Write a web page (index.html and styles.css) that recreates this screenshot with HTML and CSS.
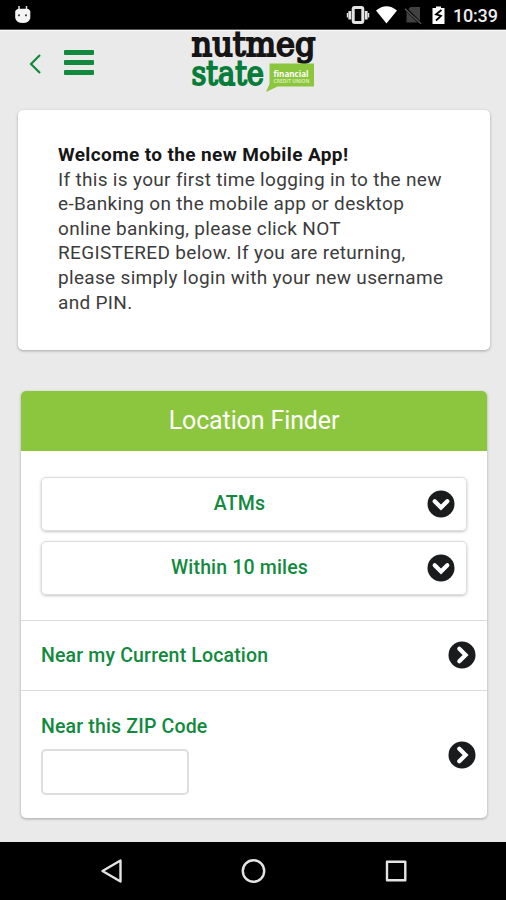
FILE: index.html
```html
<!DOCTYPE html>
<html lang="en">
<head>
<meta charset="utf-8">
<title>Nutmeg State Financial Credit Union</title>
<link rel="stylesheet" href="styles.css">
</head>
<body>
<div class="screen">
  <div class="status">
    <svg class="droid" width="18" height="20" viewBox="0 0 18 20"><path d="M5 1v5M12.500 1v5" stroke="#ddd" stroke-width="1.500"/><path d="M1.200 6Q3 3.800 5 3.800h8q2 0 3.300 2.200v7q-1 5-7.500 5T1.200 13z" fill="#f4f4f4"/><circle cx="5" cy="10.300" r="1.100" fill="#444"/><circle cx="12" cy="10.300" r="1.100" fill="#444"/></svg>
    <svg width="110" height="30" viewBox="0 0 110 30">
      <g stroke="#e4e4e4" fill="none"><rect x="7.200" y="7.500" width="9.600" height="15" rx="1.500" stroke-width="3"/><path d="M3.800 11v8.500M20.200 11v8.500" stroke-width="2.800"/><path d="M1.500 13v4.500M22.500 13v4.500" stroke-width="1.400"/></g>
      <path d="M30 10.500Q40.500 2 51 10.500L40.500 23.500z" fill="#fff"/>
      <path d="M60.500 11l4-4H74v15.500H60.500z" fill="#414141"/><path d="M58.800 7.800L75 24" stroke="#000" stroke-width="3"/><path d="M59 8.800L75 23.700" stroke="#555" stroke-width="1.500"/>
      <path d="M86.500 8h3.500V6.500h5V8h3.500v16h-12z" fill="#fff"/><path d="M95.500 10l-5.500 4.300 5 1.600-5 4.600" fill="none" stroke="#000" stroke-width="1.800"/>
    </svg>
    <span class="clock">10:39</span>
  </div>
  <header class="top">
    <svg class="back" width="14" height="22" viewBox="0 0 14 22"><path d="M12 2L3 11l9 9" fill="none" stroke="#118a3e" stroke-width="2.200"/></svg>
    <div class="menu"><i></i><i></i><i></i></div>
    <svg class="logo" width="130" height="66" viewBox="0 0 130 66">
      <text class="brand dark" x="1.500" y="24.500" textLength="124" lengthAdjust="spacingAndGlyphs">nutmeg</text>
      <text class="brand green" x="1.500" y="54" textLength="72.500" lengthAdjust="spacingAndGlyphs">state</text>
      <path d="M79.500 32.500H124v23H87.500L76 61l3.500-8z" fill="#8cc63e"/>
      <text class="fin" x="83.500" y="45.700" textLength="35" lengthAdjust="spacingAndGlyphs">financial</text>
      <text class="cu" x="83.500" y="51.700" textLength="36" lengthAdjust="spacingAndGlyphs">CREDIT UNION</text>
    </svg>
  </header>
  <section class="card welcome">
    <b>Welcome to the new Mobile App!</b>
    <p>If this is your first time logging in to the new<br>e-Banking on the mobile app or desktop<br>online banking, please click NOT<br>REGISTERED below. If you are returning,<br>please simply login with your new username<br>and PIN.</p>
  </section>
  <section class="card finder">
    <h1>Location Finder</h1>
    <div class="selects">
      <div class="select"><span>ATMs</span><svg class="disc down" viewBox="0 0 28 28"><circle cx="14" cy="14" r="13.500" fill="#191b1d"/><path d="M11.300 7.700l6.300 6.300-6.300 6.300" fill="none" stroke="#fff" stroke-width="4.200" stroke-linecap="round"/></svg></div>
      <div class="select"><span>Within 10 miles</span><svg class="disc down" viewBox="0 0 28 28"><circle cx="14" cy="14" r="13.500" fill="#191b1d"/><path d="M11.300 7.700l6.300 6.300-6.300 6.300" fill="none" stroke="#fff" stroke-width="4.200" stroke-linecap="round"/></svg></div>
    </div>
    <div class="row near"><span>Near my Current Location</span><svg class="disc" viewBox="0 0 28 28"><circle cx="14" cy="14" r="13.500" fill="#191b1d"/><path d="M11.300 7.700l6.300 6.300-6.300 6.300" fill="none" stroke="#fff" stroke-width="4.200" stroke-linecap="round"/></svg></div>
    <div class="row zip"><label><span>Near this ZIP Code</span><input type="text"></label><svg class="disc" viewBox="0 0 28 28"><circle cx="14" cy="14" r="13.500" fill="#191b1d"/><path d="M11.300 7.700l6.300 6.300-6.300 6.300" fill="none" stroke="#fff" stroke-width="4.200" stroke-linecap="round"/></svg></div>
  </section>
  <nav class="nav">
    <svg width="506" height="58" viewBox="0 0 506 58" fill="none" stroke="#e4e4e4" stroke-width="2.400" stroke-linejoin="round"><path d="M120.500 18.500v21L102.500 29z"/><circle cx="253.500" cy="29" r="10.700"/><rect x="387" y="19.700" width="18.300" height="18.600"/></svg>
  </nav>
</div>
</body>
</html>
```
FILE: styles.css
```css
* { box-sizing: border-box; }
body { margin: 0; font-family: Roboto, "Liberation Sans", sans-serif; background: #eaeaea; }
svg { display: block; flex: none; }
.screen { width: 506px; height: 900px; display: flex; flex-direction: column; overflow: hidden; }
.status { height: 30px; flex: none; background: #000; border-bottom: 1px solid #555; display: flex; padding-left: 14px; color: #eee; }
.droid { margin: 5px 314px 0 0; }
.clock { font-size: 18px; font-weight: 500; line-height: 32px; margin-left: -3px; letter-spacing: -.2px; }
.top { height: 79px; flex: none; display: flex; border-top: 1px solid #f8f8f8; }
.back { margin: 22px 0 0 28px; }
.menu { width: 30px; margin: 19px 0 0 22px; display: flex; flex-direction: column; gap: 5px; }
.menu i { height: 5px; border-radius: 1px; background: #118a3e; }
.logo { margin-left: 96px; overflow: visible; }
.brand { font: 33px "DejaVu Serif", serif; stroke-width: 1.900px; }
.dark { fill: #151515; stroke: #151515; }
.green { fill: #087c39; stroke: #087c39; }
.fin { font: bold 8.500px "Open Sans", sans-serif; fill: #fff; }
.cu { font: bold 4.500px "Open Sans", sans-serif; fill: #d9efb4; }
.card { background: #fff; border-radius: 5px; flex: none; box-shadow: 0 1px 3px rgba(0,0,0,.3); }
.welcome { margin: 1px 16px 0 18px; height: 240px; padding: 33px 40px; font-size: 19px; line-height: 24.600px; letter-spacing: .32px; color: #3c3c3c; white-space: nowrap; }
.welcome b { color: #161616; font-weight: 700; letter-spacing: .38px; }
.welcome p { margin: 0; }
.finder { margin: 41px 19px 0 21px; height: 427px; display: flex; flex-direction: column; overflow: hidden; color: #118a3e; font-size: 19.500px; font-weight: 500; letter-spacing: .16px; }
h1 { margin: 0; height: 60px; flex: none; background: #8cc63e; color: #fff; font-size: 25px; font-weight: 400; line-height: 59px; text-align: center; letter-spacing: -.12px; }
.selects { height: 169px; flex: none; padding: 26px 20px 0; display: flex; flex-direction: column; gap: 10px; }
.select { height: 54px; border: 1px solid #dedede; border-radius: 5px; box-shadow: 0 1px 3px rgba(0,0,0,.23); display: grid; grid-template-columns: 1fr 28px; align-items: center; padding: 0 11px 0 10px; text-align: center; }
.select span { line-height: 52px; }
.disc { width: 28px; height: 28px; }
.down { transform: rotate(90deg); }
.row { display: flex; justify-content: space-between; padding: 0 11px 0 20px; border-top: 1px solid #dcdcdc; }
.near { height: 70px; align-items: center; flex: none; padding-bottom: 1px; }
.zip { flex: 1; align-items: center; }
.zip label { display: flex; flex-direction: column; gap: 10px; padding-top: 1px; }
.zip span { line-height: 24px; }
.zip input { width: 148px; height: 46px; border: 2px solid #dedede; border-radius: 5px; background: #fff; }
.nav { margin-top: 24px; height: 58px; flex: none; background: #000; }
```
